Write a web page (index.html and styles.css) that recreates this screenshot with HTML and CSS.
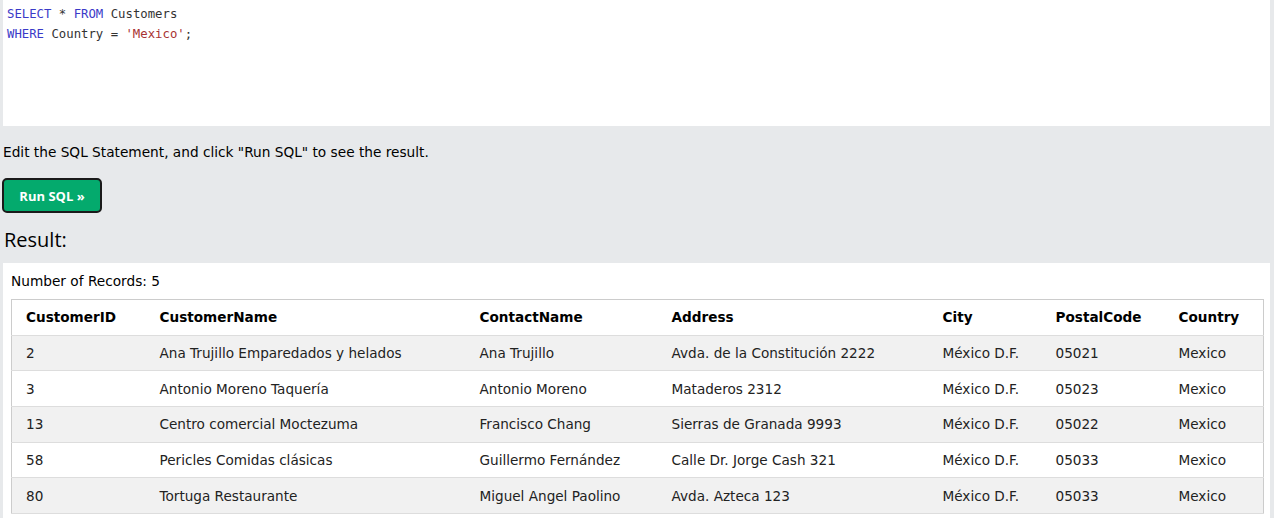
FILE: index.html
```html
<!DOCTYPE html>
<html>
<head>
<meta charset="utf-8">
<link rel="stylesheet" href="styles.css">
</head>
<body>
<div class="editor">
  <div class="line"><span class="kw">SELECT</span> * <span class="kw">FROM</span> Customers</div>
  <div class="line"><span class="kw">WHERE</span> Country = <span class="str">'Mexico'</span>;</div>
</div>
<p class="hint">Edit the SQL Statement, and click "Run SQL" to see the result.</p>
<button class="run">Run SQL »</button>
<h2 class="result-title">Result:</h2>
<div class="result">
  <div class="count">Number of Records: 5</div>
  <table class="grid">
    <colgroup>
      <col class="c1"><col class="c2"><col class="c3"><col class="c4"><col class="c5"><col class="c6"><col class="c7">
    </colgroup>
    <tr><th>CustomerID</th><th>CustomerName</th><th>ContactName</th><th>Address</th><th>City</th><th>PostalCode</th><th>Country</th></tr>
    <tr><td>2</td><td>Ana Trujillo Emparedados y helados</td><td>Ana Trujillo</td><td>Avda. de la Constitución 2222</td><td>México D.F.</td><td>05021</td><td>Mexico</td></tr>
    <tr><td>3</td><td>Antonio Moreno Taquería</td><td>Antonio Moreno</td><td>Mataderos 2312</td><td>México D.F.</td><td>05023</td><td>Mexico</td></tr>
    <tr><td>13</td><td>Centro comercial Moctezuma</td><td>Francisco Chang</td><td>Sierras de Granada 9993</td><td>México D.F.</td><td>05022</td><td>Mexico</td></tr>
    <tr><td>58</td><td>Pericles Comidas clásicas</td><td>Guillermo Fernández</td><td>Calle Dr. Jorge Cash 321</td><td>México D.F.</td><td>05033</td><td>Mexico</td></tr>
    <tr><td>80</td><td>Tortuga Restaurante</td><td>Miguel Angel Paolino</td><td>Avda. Azteca 123</td><td>México D.F.</td><td>05033</td><td>Mexico</td></tr>
  </table>
</div>
</body>
</html>
```
FILE: styles.css
```css
html, body {
  margin: 0;
  padding: 0;
  background: #e7e9eb;
  font-family: "DejaVu Sans", Verdana, sans-serif;
  color: #000;
}
.editor {
  background: #fff;
  margin: 0 4px 0 3px;
  height: 126px;
  box-sizing: border-box;
  padding: 4px 4px 0;
  font-family: "DejaVu Sans Mono", "Liberation Mono", monospace;
  font-size: 12.3px;
  line-height: 20px;
  color: #333;
}
.kw { color: #3a3ac8; }
.str { color: #a83232; }
.hint {
  margin: 17px 0 0 3px;
  font-size: 13.7px;
  line-height: 18px;
}
.run {
  display: block;
  margin: 17px 0 0 2px;
  width: 100px;
  height: 35px;
  background: #04aa6d;
  color: #fff;
  border: 2px solid #1a1a1a;
  border-radius: 5px;
  font-family: "Open Sans", sans-serif;
  font-weight: 700;
  font-size: 13px;
  padding: 0;
}
.result-title {
  margin: 13px 0 0 4px;
  font-family: "Open Sans", sans-serif;
  font-weight: 400;
  font-size: 20px;
  line-height: 28px;
}
.result {
  background: #fff;
  margin: 9px 4px 0 3px;
  padding: 9px 7px 8px 8px;
}
.count {
  font-size: 13.7px;
  line-height: 18px;
  margin: 0 0 9px 0;
}
.grid {
  width: 1252px;
  table-layout: fixed;
  border-collapse: collapse;
  border: 1px solid #ccc;
  font-size: 13.6px;
}
.c1 { width: 140px; }
.c2 { width: 320px; }
.c3 { width: 192px; }
.c4 { width: 271px; }
.c5 { width: 113px; }
.c6 { width: 123px; }
.c7 { width: 93px; }
.grid th, .grid td {
  text-align: left;
  padding: 0 8px;
  height: 34.7px;
  border-bottom: 1px solid #ddd;
  white-space: nowrap;
}
.grid th:first-child, .grid td:first-child { padding-left: 14px; }
.grid th { font-weight: 700; color: #000; }
.grid td { color: #222; }
.grid tr:nth-child(even) { background: #f1f1f1; }
```
